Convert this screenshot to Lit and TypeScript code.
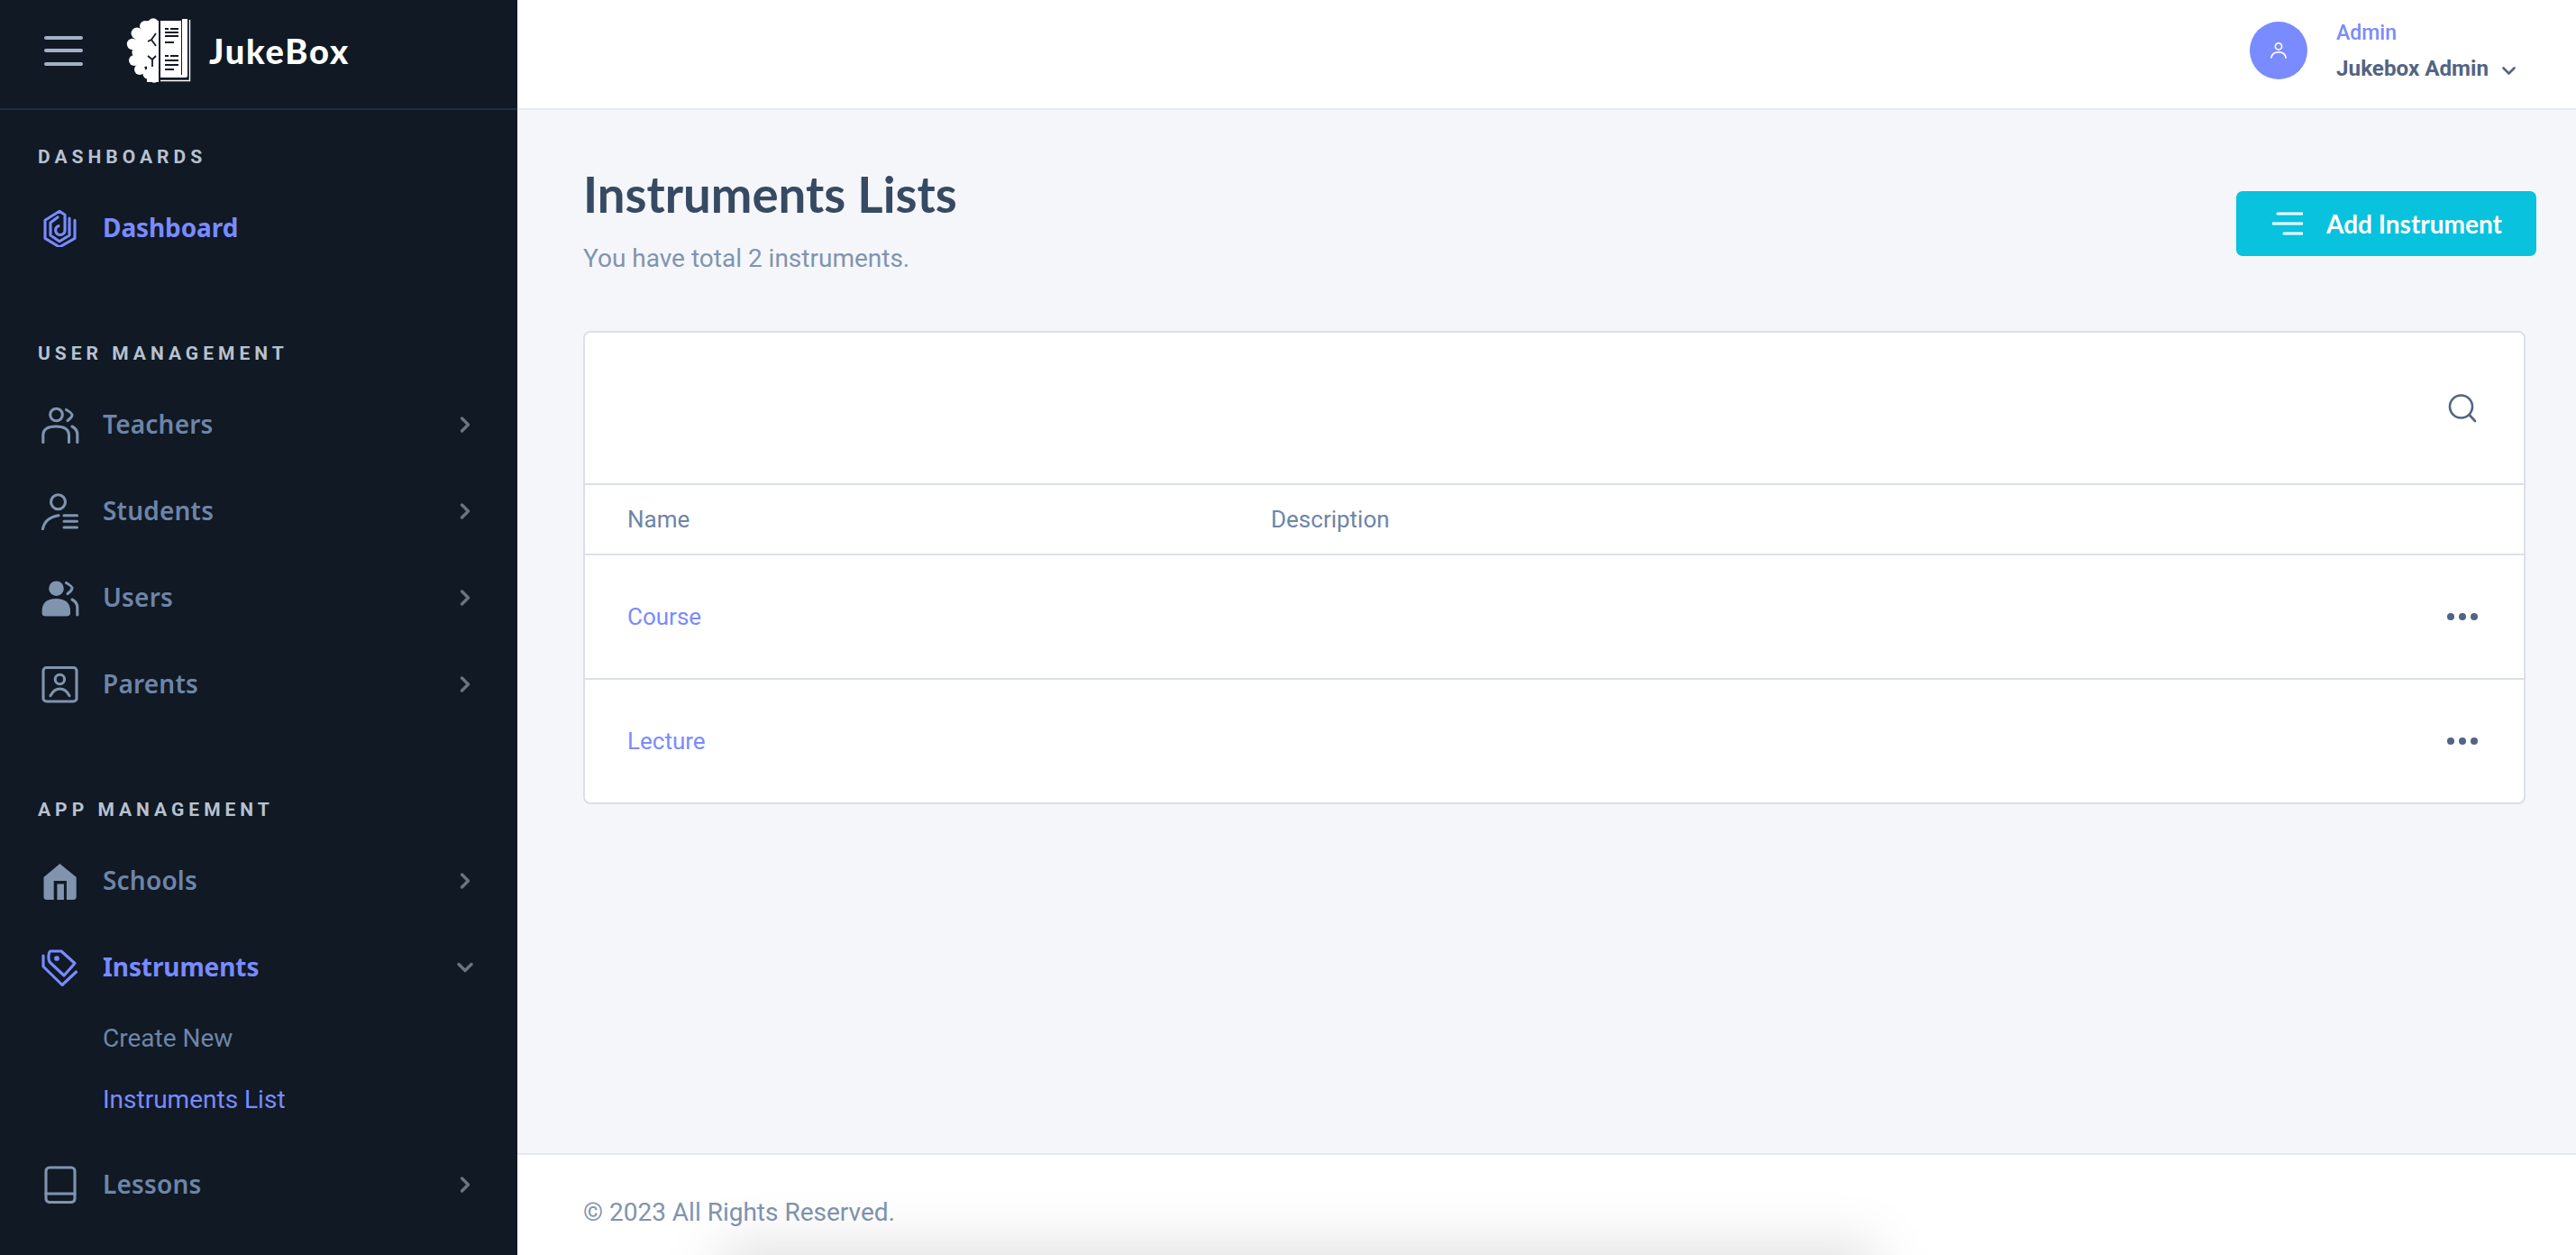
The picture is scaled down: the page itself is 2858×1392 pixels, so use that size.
import { LitElement, html, css, svg } from "lit";
import { customElement } from "lit/decorators.js";

const I = (body: unknown) => html`<svg class="ico" viewBox="0 0 44 44" fill="none" stroke="currentColor" stroke-width="3.1" stroke-linecap="round" stroke-linejoin="round">${body}</svg>`;

const icons: Record<string, unknown> = {
  dash: I(svg`<path d="M39 14.3 V34.3 L22 44 L6 34.3 V14.3 L22 4.3 L28 8.3 V26 A5.2 5.2 0 1 1 21 20.5"/><path d="M20 11 L12 17 V31 L22 37.7 L33 31 V12"/>`),
  teachers: I(svg`<circle cx="18.5" cy="12" r="6.8"/><path d="M29.5 6.5 Q36.5 10.5 36 12.6 Q35.5 15 31 18.5"/><path d="M3.8 42.6 V35 Q3.8 25 18 25 Q32.5 25 32.5 35 V42.6"/><path d="M36 25 Q41.8 28 41.8 34 V42.6"/>`),
  students: I(svg`<circle cx="20.5" cy="12.7" r="8"/><path d="M3.4 42.7 Q6 30 21 27.7"/><path d="M27 27.7 H41.5 M27 34.3 H41.5 M27 41 H41.5"/>`),
  users: I(svg`<circle cx="18.5" cy="12.7" r="8.3" fill="currentColor" stroke="none"/><path d="M2.6 38 Q2.6 24 18 24 Q34 24 34 38 V41 Q33 43.5 30 43.5 H7 Q2.6 43.5 2.6 40 Z" fill="currentColor" stroke="none"/><path d="M29.5 6.5 Q36.5 10.5 36 12.6 Q35.5 15 31 18.5"/><path d="M36 25 Q41.8 28 41.8 34 V42"/>`),
  parents: I(svg`<rect x="4" y="4.5" width="37" height="37.5" rx="3.5"/><circle cx="22.4" cy="17.5" r="5.2"/><path d="M12 35.6 Q16 28 22.4 28 Q29 28 33 35.6"/>`),
  schools: I(svg`<path d="M22.4 4 L40.7 19 V40.5 Q40.7 44 37 44 H29.9 V23 H15.7 V44 H8 Q4.5 44 4.5 40.5 V19 Z" fill="currentColor" stroke="none"/><rect x="19.4" y="26.5" width="7.5" height="17.5" fill="currentColor" stroke="none"/>`),
  tag: I(svg`<path d="M12 5 H24 L39 18.5 L27 32 L11.5 17.5 Q9.5 15 10 10 Q10.5 5 12 5 Z"/><path d="M4 10 V22 L25 42.5 L40.5 28"/><circle cx="19" cy="13" r="1.3" fill="currentColor"/>`),
  book: I(svg`<rect x="7" y="4" width="32" height="38.5" rx="4"/><path d="M7 33 H39"/>`),
  chevR: html`<svg class="chev" viewBox="0 0 12 20" fill="none" stroke="currentColor" stroke-width="3.4" stroke-linecap="round" stroke-linejoin="round"><path d="M2.5 3 L9.5 10 L2.5 17"/></svg>`,
  chevD: html`<svg class="chevd" viewBox="0 0 20 12" fill="none" stroke="currentColor" stroke-width="3.4" stroke-linecap="round" stroke-linejoin="round"><path d="M3 2.5 L10 9.5 L17 2.5"/></svg>`,
};

const logo = html`<svg class="logo" viewBox="-3 0 73 72">
  <g fill="#fff">
    <circle cx="27" cy="6" r="5.8"/><circle cx="18" cy="9" r="6"/><circle cx="9" cy="17" r="6.5"/>
    <circle cx="4" cy="29" r="6.2"/><circle cx="9" cy="38" r="5.6"/><circle cx="6" cy="47" r="6"/>
    <circle cx="12" cy="57" r="6"/><circle cx="21" cy="62" r="5.5"/><circle cx="28" cy="67" r="4.8"/>
    <circle cx="18" cy="22" r="11"/><circle cx="17" cy="43" r="11"/>
    <rect x="20" y="3" width="13" height="68"/><rect x="8" y="18" width="16" height="34"/>
  </g>
  <path d="M30 17 L25 24 L21 26 M25 24 L30 31 M21 42 L26 46 L30 42 M26 46 V54" fill="none" stroke="#101924" stroke-width="1.8"/>
  <rect x="35" y="3" width="23" height="60" fill="#fff"/>
  <g fill="#101924">
    <rect x="40" y="11" width="4" height="2"/><rect x="46" y="11" width="9" height="2"/><rect x="40" y="15" width="15" height="2"/><rect x="40" y="19" width="15" height="2"/><rect x="40" y="26" width="10" height="2"/>
    <rect x="40" y="41" width="4" height="2"/><rect x="46" y="41" width="9" height="2"/><rect x="40" y="46" width="15" height="2"/><rect x="40" y="51" width="15" height="2"/><rect x="40" y="56" width="10" height="2"/>
  </g>
  <path d="M59 1 H65 V64 Q65 66 63 66 H35 V63 H59 Z" fill="#fff"/>
  <path d="M67.5 2 V69.5 H35" fill="none" stroke="#fff" stroke-width="1.4"/>
</svg>`;

@customElement("nav-item")
class NavItem extends LitElement {
  static properties = { label: {}, icon: {}, active: { type: Boolean }, open: { type: Boolean }, nochev: { type: Boolean } };
  label = ""; icon = ""; active = false; open = false; nochev = false;
  static styles = css`
    :host { display: block; }
    .row { display: flex; align-items: center; height: 96px; padding: 0 48px 0 44px; color: #6e85a8; }
    .row.active { color: #798bff; }
    .ic { width: 44px; height: 44px; flex: none; color: #8094ae; display: flex; }
    .row.active .ic { color: #798bff; }
    .ic svg { width: 44px; height: 44px; }
    .label { margin-left: 26px; flex: 1; font: 600 28px/1 "Noto Sans", sans-serif; letter-spacing: .2px; }
    .row.active .label { font-weight: 700; letter-spacing: -.1px; }
    .side { color: #6c7480; display: flex; width: 20px; justify-content: center; margin-top: 2px; }
    .chev { width: 12px; height: 20px; }
    .chevd { width: 20px; height: 12px; }
  `;
  render() {
    return html`<div class="row ${this.active ? "active" : ""}">
      <span class="ic">${(icons as any)[this.icon]}</span>
      <span class="label">${this.label}</span>
      ${this.nochev ? "" : html`<span class="side">${this.open ? icons.chevD : icons.chevR}</span>`}
    </div>`;
  }
}

@customElement("app-root")
export class AppRoot extends LitElement {
  static styles = css`
    :host { display: block; height: 1392px; overflow: hidden; font-family: "Roboto", sans-serif; }
    .shell { display: grid; grid-template-columns: 574px 1fr; height: 1392px; position: relative; overflow: hidden; }
    .side { background: #101924; height: 1392px; overflow: hidden; }
    .brand { height: 120px; box-sizing: content-box; border-bottom: 2px solid #1f2f41; display: flex; align-items: center; padding-left: 49px; }
    .brandin { display: flex; align-items: center; margin-top: -8px; }
    .burger { width: 43px; height: 33px; display: flex; flex-direction: column; justify-content: space-between; }
    .burger i { display: block; height: 4px; border-radius: 2px; background: #a3b1c6; }
    .logo { width: 73px; height: 72px; margin-left: 48px; }
    .word { margin-left: 19px; color: #fff; font: 900 38px/1 "Lato", sans-serif; letter-spacing: 1.8px; }
    .sec { height: 24px; margin: 0 0 18px 42px; font: 700 21px/24px "Roboto", sans-serif; letter-spacing: 5px; color: #b7c2d0; }
    .first { margin-top: 40px; }
    .gap { margin-top: 80px; }
    .sub { height: 68px; display: flex; align-items: center; padding-left: 114px; font: 400 28px/1 "Roboto", sans-serif; color: #6e85a8; }
    .sub.on { color: #798bff; }
    .subs { margin: -2px 0 11px; }
    main { display: flex; flex-direction: column; height: 1392px; min-width: 0; background: #f5f6fa; }
    header { height: 120px; flex: none; box-sizing: content-box; background: #fff; border-bottom: 2px solid #e5e9f2; display: flex; align-items: center; justify-content: flex-end; padding: 0 67px 0 0; }
    .hdin { display: flex; align-items: center; margin-top: -8px; }
    .av { width: 64px; height: 64px; border-radius: 50%; background: #798bff; display: flex; align-items: center; justify-content: center; color: #fff; }
    .av svg { width: 20px; height: 20px; }
    .who { margin-left: 32px; }
    .role { font: 500 23px/28px "Roboto", sans-serif; color: #798bff; }
    .name { margin-top: 11px; display: flex; align-items: center; font: 700 24.2px/28px "Roboto", sans-serif; color: #526484; }
    .name svg { width: 15px; height: 9px; margin-left: 15px; margin-top: 5px; }
    .content { flex: 1; min-height: 0; padding: 61px 56px 0 73px; position: relative; }
    .headrow { display: flex; justify-content: space-between; }
    h1 { margin: 0; font: 700 54.5px/64px "Lato", sans-serif; color: #364a63; }
    .subtitle { margin-top: 23px; font: 400 28px/34px "Roboto", sans-serif; color: #8094ae; }
    .btn { margin: 29px -12px 0 0; width: 333px; height: 72px; box-sizing: border-box; border-radius: 7px; background: #09c2de; color: #fff; display: flex; align-items: center; padding-left: 40px; font: 700 28px/1 "Lato", sans-serif; }
    .btn svg { width: 34px; height: 26px; margin-right: 26px; }
    .card { margin-top: 63px; border: 2px solid #dbdfea; border-radius: 8px; background: #fff; }
    .tools { height: 167px; border-bottom: 2px solid #dbdfea; display: flex; align-items: center; justify-content: flex-end; padding-right: 52px; color: #526484; }
    .tools svg { width: 32px; height: 32px; }
    .tr { display: grid; grid-template-columns: 714px 1fr 34px; align-items: center; padding: 0 51px 0 47px; font: 400 26px/1 "Roboto", sans-serif; }
    .th { height: 76px; color: #6e85a8; border-bottom: 2px solid #dbdfea; }
    .td { height: 136px; color: #798bff; }
    .td + .td { border-top: 2px solid #dbdfea; }
    .dots { display: flex; justify-content: space-between; }
    .dots i { width: 8px; height: 8px; border-radius: 50%; background: #526484; }
    footer { height: 113px; box-sizing: border-box; flex: none; background: #fff; border-top: 2px solid #e5e9f2; padding: 48px 0 0 73px; font: 400 28px/32px "Roboto", sans-serif; color: #8094ae; }
    .shadow { position: absolute; left: 800px; bottom: -50px; width: 1280px; height: 60px; background: rgba(0,0,0,.13); filter: blur(30px); pointer-events: none; }
  `;
  render() {
    return html`<div class="shell">
      <aside class="side">
        <div class="brand">
          <div class="brandin">
            <div class="burger"><i></i><i></i><i></i></div>
            ${logo}
            <span class="word">JukeBox</span>
          </div>
        </div>
        <div class="sec first">DASHBOARDS</div>
        <nav-item label="Dashboard" icon="dash" active nochev></nav-item>
        <div class="sec gap">USER MANAGEMENT</div>
        <nav-item label="Teachers" icon="teachers"></nav-item>
        <nav-item label="Students" icon="students"></nav-item>
        <nav-item label="Users" icon="users"></nav-item>
        <nav-item label="Parents" icon="parents"></nav-item>
        <div class="sec gap">APP MANAGEMENT</div>
        <nav-item label="Schools" icon="schools"></nav-item>
        <nav-item label="Instruments" icon="tag" active open></nav-item>
        <div class="subs">
          <div class="sub">Create New</div>
          <div class="sub on">Instruments List</div>
        </div>
        <nav-item label="Lessons" icon="book"></nav-item>
      </aside>
      <main>
        <header>
          <div class="hdin">
            <div class="av"><svg viewBox="0 0 22 22" fill="none" stroke="currentColor" stroke-width="1.8" stroke-linecap="round"><circle cx="11" cy="6" r="4"/><path d="M2 20 Q3 13 11 13 Q19 13 20 20"/></svg></div>
            <div class="who">
              <div class="role">Admin</div>
              <div class="name">Jukebox Admin <svg viewBox="0 0 15 9" fill="none" stroke="currentColor" stroke-width="2.6" stroke-linecap="round" stroke-linejoin="round"><path d="M1.5 1.5 L7.5 7.5 L13.5 1.5"/></svg></div>
            </div>
          </div>
        </header>
        <div class="content">
          <div class="headrow">
            <div>
              <h1>Instruments Lists</h1>
              <div class="subtitle">You have total 2 instruments.</div>
            </div>
            <div class="btn"><svg viewBox="0 0 34 26" fill="none" stroke="#fff" stroke-width="3" stroke-linecap="round"><path d="M6 2 H33 M1 13 H33 M13 24 H33"/></svg>Add Instrument</div>
          </div>
          <div class="card">
            <div class="tools"><svg viewBox="0 0 32 32" fill="none" stroke="currentColor" stroke-width="2.6" stroke-linecap="round"><circle cx="14.5" cy="14" r="12.5"/><path d="M23.5 23 L30 30"/></svg></div>
            <div class="tr th"><span>Name</span><span>Description</span><span></span></div>
            <div class="tr td"><span>Course</span><span></span><span class="dots"><i></i><i></i><i></i></span></div>
            <div class="tr td"><span>Lecture</span><span></span><span class="dots"><i></i><i></i><i></i></span></div>
          </div>
        </div>
        <footer>© 2023 All Rights Reserved.</footer>
      </main>
      <div class="shadow"></div>
    </div>`;
  }
}
